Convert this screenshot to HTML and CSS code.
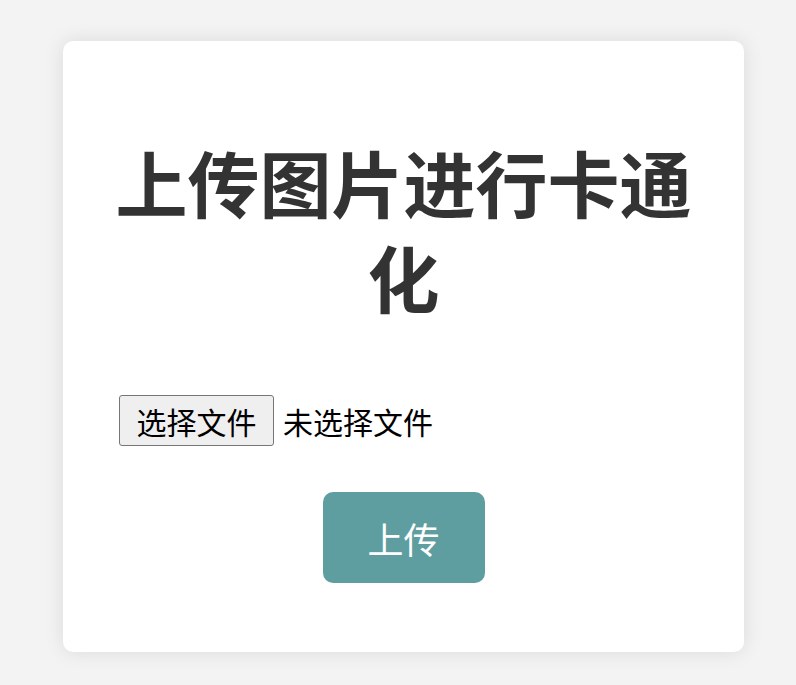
FILE: index.html
```html
<!DOCTYPE html>
<html lang="zh-CN">
<head>
<meta charset="utf-8">
<title>上传图片进行卡通化</title>
<link rel="stylesheet" href="styles.css">
</head>
<body>
<div class="card">
  <h1 class="title">上传图片进行卡通化</h1>
  <form class="form">
    <div class="file-row">
      <label class="file-btn">选择文件<input class="file-input" type="file"></label>
      <span class="file-name">未选择文件</span>
    </div>
    <div class="submit-row">
      <button class="submit" type="button">上传</button>
    </div>
  </form>
</div>
</body>
</html>
```

FILE: styles.css
```css
html, body {
  margin: 0;
  padding: 0;
}
body {
  background: #f3f3f3;
  font-family: "Microsoft YaHei", "Noto Sans CJK SC", "Noto Sans", sans-serif;
  height: 685px;
  overflow: hidden;
}
.card {
  box-sizing: border-box;
  width: 681px;
  margin: 41px 0 0 63px;
  padding: 0 56px 69px;
  background: #fff;
  border-radius: 10px;
  box-shadow: 0 0 20px rgba(0, 0, 0, 0.1);
  display: flow-root;
}
.title {
  margin: 92px -16px 0;
  font-size: 72px;
  line-height: 95px;
  font-weight: bold;
  color: #333;
  text-align: center;
}
.form {
  margin-top: 72px;
}
.file-row {
  display: flex;
  align-items: center;
  gap: 9px;
  font-size: 30px;
  color: #000;
}
.file-btn {
  box-sizing: border-box;
  height: 51px;
  width: 155px;
  display: flex;
  align-items: center;
  justify-content: center;
  background: #efefef;
  border: 1px solid #767676;
  border-radius: 3px;
}
.file-input {
  display: none;
}
.submit-row {
  display: flex;
  justify-content: center;
  margin-top: 46px;
}
.submit {
  box-sizing: border-box;
  width: 162px;
  height: 91px;
  border: none;
  border-radius: 10px;
  background: #5f9ea0;
  color: #fff;
  font-family: inherit;
  font-size: 36px;
  padding: 0;
}
```
